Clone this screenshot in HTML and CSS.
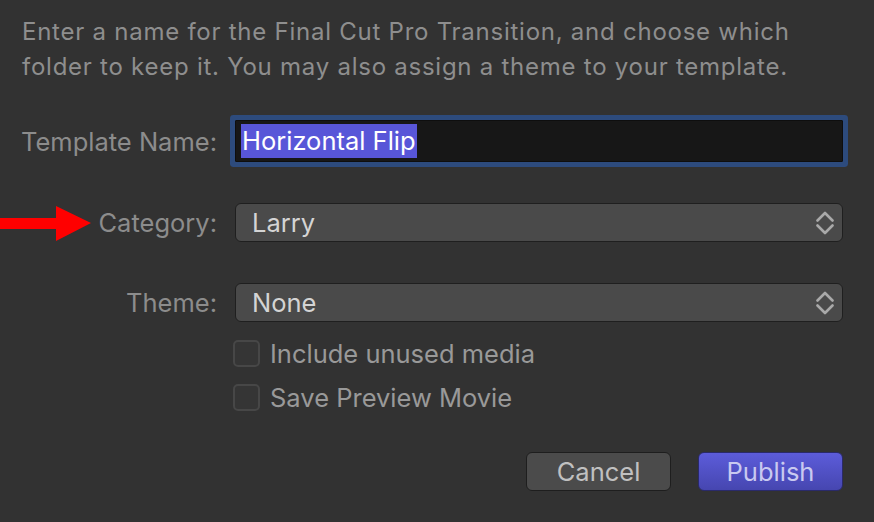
FILE: index.html
```html
<!DOCTYPE html>
<html>
<head>
<meta charset="utf-8">
<link rel="stylesheet" href="styles.css">
</head>
<body>
<div class="dialog">
  <p class="desc">Enter a name for the Final Cut Pro Transition, and choose which folder to keep it. You may also assign a theme to your template.</p>

  <div class="row row-name">
    <label class="label">Template Name:</label>
    <div class="field"><span class="sel">Horizontal Flip</span></div>
  </div>

  <div class="row row-cat">
    <div class="label label-arrow">
      <svg class="arrow" width="92" height="36" viewBox="0 0 92 36"><polygon points="0,12 56,12 56,0 91,17 56,35 56,23 0,23" fill="#ff0000"/></svg>
      <span>Category:</span>
    </div>
    <div class="popup"><span>Larry</span>
      <svg class="chev" width="18" height="24" viewBox="0 0 18 24"><polyline points="1.5,9.5 9,2 16.5,9.5" /><polyline points="1.5,14.5 9,22 16.5,14.5" /></svg>
    </div>
  </div>

  <div class="row row-theme">
    <label class="label">Theme:</label>
    <div class="popup"><span>None</span>
      <svg class="chev" width="18" height="24" viewBox="0 0 18 24"><polyline points="1.5,9.5 9,2 16.5,9.5" /><polyline points="1.5,14.5 9,22 16.5,14.5" /></svg>
    </div>
  </div>

  <div class="checks">
    <div class="check"><span class="box"></span><span>Include unused media</span></div>
    <div class="check"><span class="box"></span><span>Save Preview Movie</span></div>
  </div>

  <div class="buttons">
    <button class="btn cancel">Cancel</button>
    <button class="btn publish">Publish</button>
  </div>
</div>
</body>
</html>
```

FILE: styles.css
```css
html, body {
  margin: 0;
  padding: 0;
  background: #323232;
  width: 874px;
  height: 522px;
  overflow: hidden;
}
.dialog {
  font-family: Inter, "Noto Sans", sans-serif;
  font-size: 25.5px;
  color: #8e8e8e;
  padding: 14px 0 0 0;
  display: flex;
  flex-direction: column;
}
.desc {
  margin: 0 0 0 22px;
  font-size: 24px;
  line-height: 35px;
  width: 800px;
  letter-spacing: 0.75px;
}
.row {
  display: grid;
  grid-template-columns: 217px 608px;
  column-gap: 18px;
  align-items: center;
}
.label {
  text-align: right;
  white-space: nowrap;
  color: #8c8c8c;
}
.label-arrow {
  display: flex;
  justify-content: flex-end;
  align-items: center;
  position: relative;
}
.arrow {
  position: absolute;
  left: 0;
  top: 50%;
  margin-top: -17px;
}
.row-name { margin-top: 36px; }
.field {
  height: 40px;
  background: #171717;
  border: 1px solid #0e0e0e;
  box-shadow: 0 0 0 5px #2d4b7d;
  border-radius: 1px;
  display: flex;
  align-items: center;
  padding-left: 5px;
}
.sel {
  background: #5856d8;
  color: #ffffff;
  line-height: 34px;
  height: 34px;
  padding: 0 1px;
}
.row-cat { margin-top: 41px; }
.row-theme { margin-top: 41px; }
.popup {
  height: 37px;
  background: #4a4a4a;
  border: 1px solid #1f1f1f;
  border-radius: 6px;
  display: flex;
  align-items: center;
  justify-content: space-between;
  padding: 0 8px 0 16px;
  color: #d4d4d4;
}
.chev {
  fill: none;
  stroke: #a9a9a9;
  stroke-width: 2.6;
  stroke-linecap: round;
  stroke-linejoin: round;
}
.checks {
  margin-top: 9px;
  padding-left: 233px;
  display: flex;
  flex-direction: column;
}
.check {
  height: 44px;
  display: flex;
  align-items: center;
  gap: 10px;
  color: #999999;
}
.box {
  width: 23px;
  height: 23px;
  border: 2px solid #474747;
  border-radius: 5px;
  background: #353535;
  box-sizing: content-box;
}
.buttons {
  margin-top: 33px;
  display: flex;
  justify-content: flex-end;
  gap: 27px;
  width: 843px;
}
.btn {
  width: 145px;
  height: 39px;
  font-family: Inter, "Noto Sans", sans-serif;
  font-size: 25.5px;
  border-radius: 6px;
  padding: 0;
}
.cancel {
  background: #4b4b4b;
  border: 1px solid #1e1e1e;
  color: #c0c0c0;
}
.publish {
  background: linear-gradient(#5c5cda, #4646b0);
  border: 1px solid #2a2a6a;
  color: #c9c9f0;
}
```
